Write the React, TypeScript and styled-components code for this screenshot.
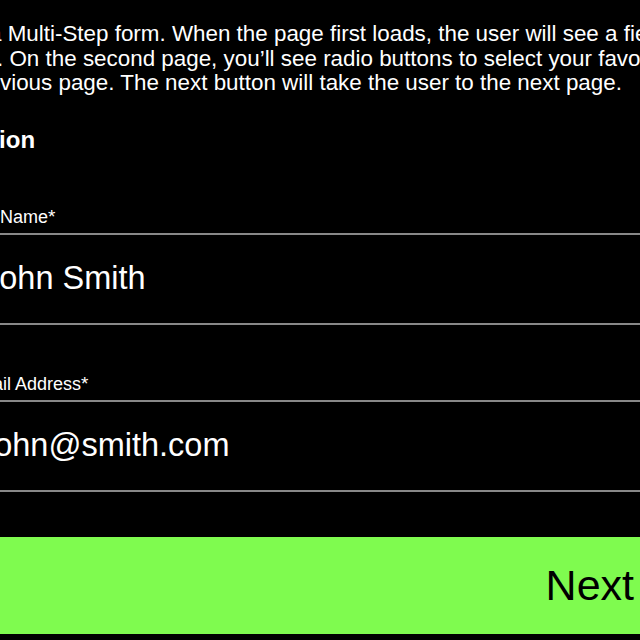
import React from "react";
import styled, { createGlobalStyle } from "styled-components";

const GlobalStyle = createGlobalStyle`
  html,
  body {
    margin: 0;
    padding: 0;
    background: #000;
  }

  body {
    font-family: "Liberation Sans", Arial, sans-serif;
    color: #fff;
  }
`;

const Page = styled.main`
  width: 640px;
  height: 640px;
  overflow: hidden;
  background: #000;
`;

const Content = styled.div`
  margin-left: -34px;
  width: calc(100% + 34px);
  padding-top: 22px;
`;

const Intro = styled.p`
  margin: 0;
  font-size: 22.4px;
  line-height: 24.5px;
`;

const IntroLine = styled.span<{ $shift: number }>`
  display: block;
  white-space: nowrap;
  margin-left: ${(p) => p.$shift}px;
`;

const SectionTitle = styled.h2<{ $shift: number }>`
  margin: 30px 0 0 ${(p) => p.$shift}px;
  font-size: 24px;
  line-height: 28px;
  font-weight: 700;
  white-space: nowrap;
`;

const Form = styled.form`
  display: flex;
  flex-direction: column;
  margin-top: 53px;
`;

const Field = styled.div`
  display: flex;
  flex-direction: column;

  & + & {
    margin-top: 49px;
  }
`;

const Label = styled.label`
  font-size: 18px;
  line-height: 20px;
  margin-bottom: 6px;
  white-space: nowrap;
`;

const Required = styled.span`
  font-size: 19px;
`;

const Input = styled.input<{ $indent: number }>`
  box-sizing: border-box;
  width: 100%;
  height: 92px;
  margin: 0;
  padding: 0 0 0 ${(p) => p.$indent}px;
  background: transparent;
  border: none;
  border-top: 2px solid #888;
  border-bottom: 2px solid #888;
  border-radius: 0;
  color: #fff;
  font-family: "Liberation Sans", Arial, sans-serif;
  font-size: 32.5px;
  line-height: 88px;
  outline: none;
`;

const NextButton = styled.button`
  box-sizing: border-box;
  width: 100%;
  height: 97px;
  margin-top: 45px;
  padding: 0 6px 0 0;
  border: none;
  border-radius: 0;
  background: #7ffb4f;
  color: #000;
  font-family: "Liberation Sans", Arial, sans-serif;
  font-size: 43px;
  text-align: right;
  cursor: pointer;
`;

export default function App() {
  const [name, setName] = React.useState("John Smith");
  const [email, setEmail] = React.useState("john@smith.com");

  return (
    <React.Fragment>
      <GlobalStyle />
      <Page>
        <Content>
          <Intro>
            <IntroLine $shift={23}>
              a Multi-Step form. When the page first loads, the user will see a field to enter their name and email.
            </IntroLine>
            <IntroLine $shift={-25}>
              name. On the second page, you’ll see radio buttons to select your favorite color.
            </IntroLine>
            <IntroLine $shift={1.6}>
              previous page. The next button will take the user to the next page.
            </IntroLine>
          </Intro>
          <SectionTitle $shift={-171}>Personal Information</SectionTitle>
          <Form onSubmit={(e) => e.preventDefault()}>
            <Field>
              <Label htmlFor="full-name">
                Full Name<Required>*</Required>
              </Label>
              <Input
                id="full-name"
                $indent={17}
                value={name}
                onChange={(e) => setName(e.target.value)}
              />
            </Field>
            <Field>
              <Label htmlFor="email">
                Email Address<Required>*</Required>
              </Label>
              <Input
                id="email"
                $indent={21}
                value={email}
                onChange={(e) => setEmail(e.target.value)}
              />
            </Field>
            <NextButton type="submit">Next</NextButton>
          </Form>
        </Content>
      </Page>
    </React.Fragment>
  );
}
